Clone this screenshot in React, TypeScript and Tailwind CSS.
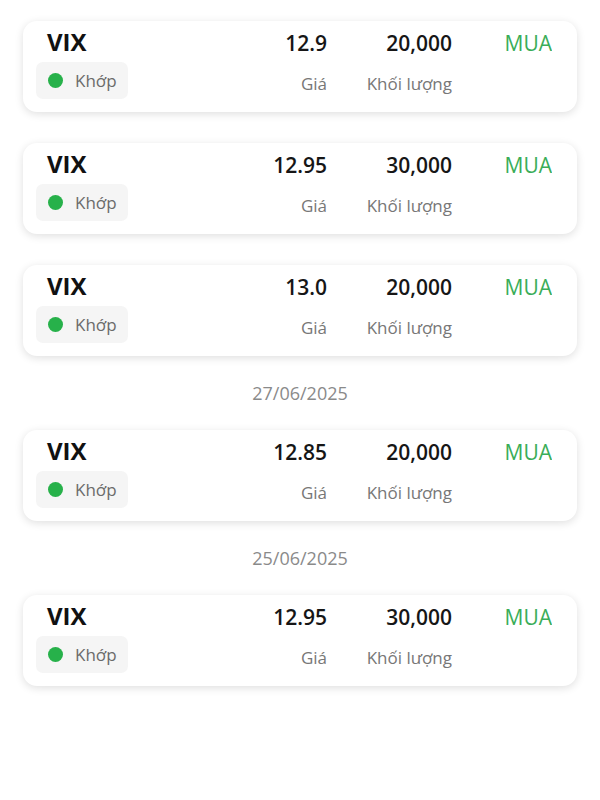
const orders = [
  { date: null, symbol: "VIX", price: "12.9", volume: "20,000" },
  { date: null, symbol: "VIX", price: "12.95", volume: "30,000" },
  { date: null, symbol: "VIX", price: "13.0", volume: "20,000" },
  { date: "27/06/2025", symbol: "VIX", price: "12.85", volume: "20,000" },
  { date: "25/06/2025", symbol: "VIX", price: "12.95", volume: "30,000" },
];

function OrderCard({ symbol, price, volume }: { symbol: string; price: string; volume: string }) {
  return (
    <div className="h-[91px] rounded-[14px] bg-white pt-[4px] pl-[13px] pr-[25px] shadow-[0_2px_9px_rgba(0,0,0,0.13)]">
      <div className="grid h-[33px] grid-cols-[1fr_90px_125px_100px] items-baseline overflow-hidden leading-[33px]">
        <div className="pl-[11px] text-[24px] font-bold text-[#111]">{symbol}</div>
        <div className="text-right text-[21px] font-semibold text-[#161616]">{price}</div>
        <div className="text-right text-[21px] font-semibold text-[#161616]">{volume}</div>
        <div className="text-right text-[21px] text-[#3aad58]">MUA</div>
      </div>
      <div className="mt-[4px] grid h-[37px] grid-cols-[1fr_90px_125px_100px] items-start">
        <div className="flex">
          <div className="flex h-[37px] w-[92px] items-center gap-[12px] rounded-[7px] bg-[#f5f5f5] pl-[12px]">
            <span className="h-[15px] w-[15px] rounded-full bg-[#27b14a]" />
            <span className="text-[17px] leading-[23px] text-[#6b6b6b]">Khớp</span>
          </div>
        </div>
        <div className="mt-[10px] text-right text-[17px] leading-[23px] text-[#777]">Giá</div>
        <div className="mt-[10px] text-right text-[17px] leading-[23px] text-[#777]">Khối lượng</div>
        <div />
      </div>
    </div>
  );
}

export default function App() {
  return (
    <div
      className="flex min-h-[800px] w-[600px] flex-col bg-white px-[23px] pt-[21px]"
      style={{ fontFamily: '"Open Sans", "Noto Sans", sans-serif' }}
    >
      {orders.map((o, i) => (
        <div key={i} className="flex flex-col">
          {o.date ? (
            <div className="py-[25px] text-center text-[18px] leading-[24px] text-[#8a8a8a]">{o.date}</div>
          ) : (
            i > 0 && <div className="h-[31px]" />
          )}
          <OrderCard symbol={o.symbol} price={o.price} volume={o.volume} />
        </div>
      ))}
    </div>
  );
}
